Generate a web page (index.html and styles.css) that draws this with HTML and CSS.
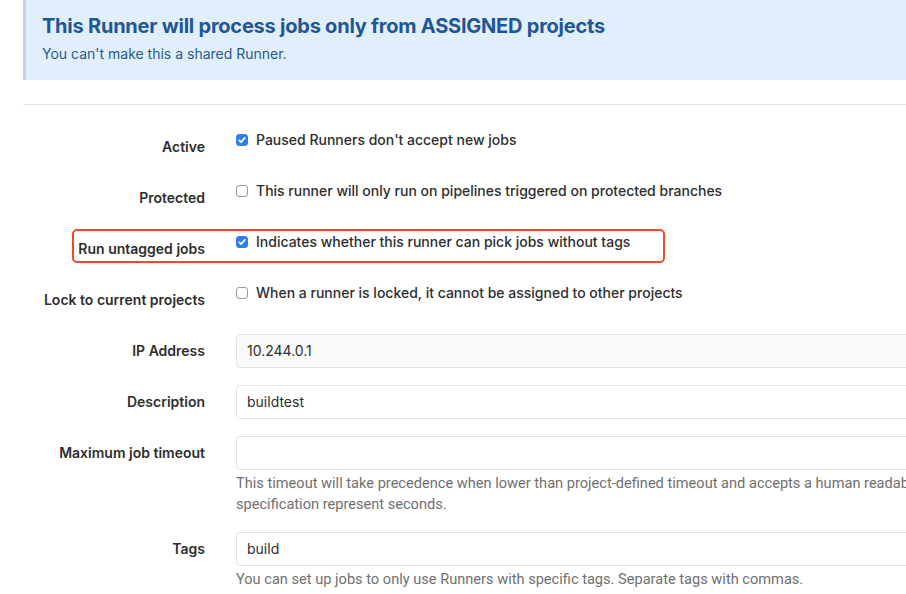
FILE: index.html
```html
<!DOCTYPE html>
<html lang="en">
<head>
<meta charset="utf-8">
<title>Runner settings</title>
<link rel="stylesheet" href="styles.css">
</head>
<body>
<div class="page">
  <div class="alert">
    <h4 class="alert-title">This Runner will process jobs only from ASSIGNED projects</h4>
    <p class="alert-text">You can't make this a shared Runner.</p>
  </div>
  <hr class="divider">
  <form class="form">
    <div class="row">
      <label class="label">Active</label>
      <div class="field check-field">
        <span class="box checked"><svg viewBox="0 0 12 12" width="12" height="12"><path d="M3.2 6.3 L5.1 8.1 L8.8 3.9" fill="none" stroke="#fff" stroke-width="1.6" stroke-linecap="round" stroke-linejoin="round"/></svg></span>
        <span class="check-text">Paused Runners don't accept new jobs</span>
      </div>
    </div>
    <div class="row">
      <label class="label">Protected</label>
      <div class="field check-field">
        <span class="box"></span>
        <span class="check-text">This runner will only run on pipelines triggered on protected branches</span>
      </div>
    </div>
    <div class="row">
      <label class="label">Run untagged jobs</label>
      <div class="field check-field">
        <span class="box checked"><svg viewBox="0 0 12 12" width="12" height="12"><path d="M3.2 6.3 L5.1 8.1 L8.8 3.9" fill="none" stroke="#fff" stroke-width="1.6" stroke-linecap="round" stroke-linejoin="round"/></svg></span>
        <span class="check-text">Indicates whether this runner can pick jobs without tags</span>
      </div>
      <div class="highlight"></div>
    </div>
    <div class="row">
      <label class="label">Lock to current projects</label>
      <div class="field check-field">
        <span class="box"></span>
        <span class="check-text">When a runner is locked, it cannot be assigned to other projects</span>
      </div>
    </div>
    <div class="row">
      <label class="label">IP Address</label>
      <div class="field">
        <div class="input readonly">10.244.0.1</div>
      </div>
    </div>
    <div class="row">
      <label class="label">Description</label>
      <div class="field">
        <div class="input">buildtest</div>
      </div>
    </div>
    <div class="row">
      <label class="label">Maximum job timeout</label>
      <div class="field">
        <div class="input"></div>
        <p class="help wide">This timeout will take precedence when lower than project-defined timeout and accepts a human readable time input language like &quot;1 hour&quot;. Values without<br>specification represent seconds.</p>
      </div>
    </div>
    <div class="row">
      <label class="label">Tags</label>
      <div class="field">
        <div class="input">build</div>
        <p class="help">You can set up jobs to only use Runners with specific tags. Separate tags with commas.</p>
      </div>
    </div>
  </form>
</div>
</body>
</html>
```

FILE: styles.css
```css
html, body {
  margin: 0;
  padding: 0;
  background: #fff;
}
body {
  font-family: Inter, "Liberation Sans", sans-serif;
  font-size: 14px;
  color: #2e2e2e;
  overflow: hidden;
}
.page {
  margin-left: 23px;
  width: 1100px;
}
.alert {
  background: #e1eefb;
  border-left: 3px solid #b8d6f3;
  height: 80px;
  box-sizing: border-box;
  padding: 14px 0 0 16px;
}
.alert-title {
  margin: 0;
  font-size: 20px;
  line-height: 24px;
  font-weight: 700;
  color: #1f5796;
  letter-spacing: -0.23px;
}
.alert-text {
  margin: 6px 0 0;
  font-size: 14px;
  line-height: 20px;
  color: #2a5a8e;
}
.divider {
  margin: 24px 0 0;
  border: 0;
  border-top: 1px solid #e5e5e5;
  height: 0;
}
.form {
  padding-top: 25px;
}
.row {
  position: relative;
  display: grid;
  grid-template-columns: 182px 1fr;
  column-gap: 31px;
  min-height: 34px;
  margin-bottom: 17px;
}
.label {
  text-align: right;
  font-weight: 600;
  line-height: 20px;
  padding-top: 7px;
  color: #2e2e2e;
}
.check-field {
  display: flex;
  align-items: center;
  align-self: start;
  height: 20px;
  gap: 8px;
}
.check-text {
  font-weight: 500;
  line-height: 20px;
  color: #2e2e2e;
}
.box {
  width: 12px;
  height: 12px;
  box-sizing: border-box;
  border: 1px solid #9a9a9a;
  border-radius: 3px;
  background: #fff;
  display: flex;
  flex: none;
}
.box.checked {
  background: #2f7ff0;
  border-color: #2f7ff0;
}
.box.checked svg {
  margin: -1px;
}
.input {
  height: 34px;
  box-sizing: border-box;
  border: 1px solid #e2e2e2;
  border-radius: 4px;
  padding: 0 10px;
  line-height: 32px;
  font-size: 14px;
  color: #2e2e2e;
  background: #fff;
}
.input.readonly {
  background: #f9f9f9;
}
.help {
  margin: 3px 0 0;
  font-family: Roboto, "Liberation Sans", sans-serif;
  font-size: 14.6px;
  line-height: 21px;
  color: #707070;
  white-space: nowrap;
}
.highlight {
  position: absolute;
  left: 49px;
  top: -3px;
  width: 593px;
  height: 34px;
  box-sizing: border-box;
  border: 2px solid #f24a26;
  border-radius: 5px;
}
```
